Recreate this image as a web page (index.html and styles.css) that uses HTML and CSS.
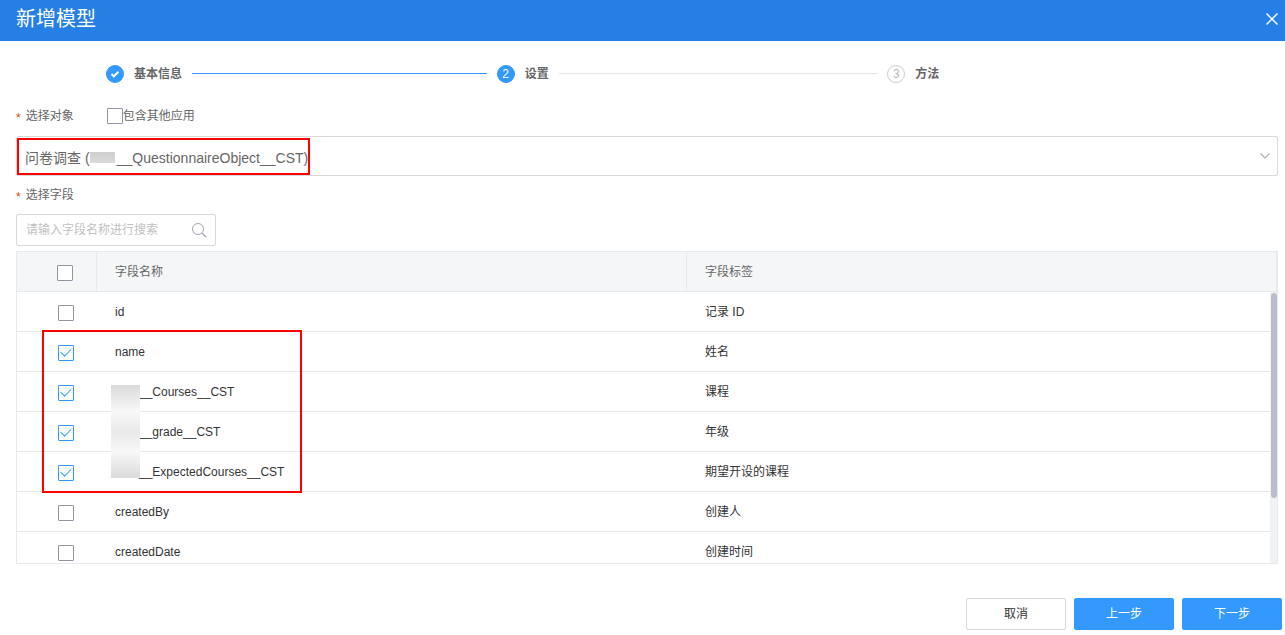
FILE: index.html
```html
<!DOCTYPE html>
<html lang="zh-CN">
<head>
    <meta charset="UTF-8">
    <meta name="viewport" content="width=device-width, initial-scale=1.0">
    <title>新增模型</title>
    <link rel="stylesheet" href="styles.css">
</head>
<body>

<header class="header">
    <h1>新增模型</h1>
    <button class="close" type="button" aria-label="关闭">
        <svg width="12" height="12" viewBox="0 0 12 12"><path d="M.5.5l11 11M11.5.5l-11 11" stroke="#fff" stroke-width="1.4" fill="none"/></svg>
    </button>
</header>

<main class="content">
    <ol class="steps">
        <li class="step done">
            <span class="step-icon">
                <svg width="10" height="10" viewBox="0 0 10 10"><path d="M1.5 5l2.3 2.3L8.5 2.8" stroke="#fff" stroke-width="2" fill="none"/></svg>
            </span>
            <span class="step-title">基本信息</span>
        </li>
        <li class="step active">
            <span class="step-icon">2</span>
            <span class="step-title">设置</span>
        </li>
        <li class="step">
            <span class="step-icon">3</span>
            <span class="step-title">方法</span>
        </li>
    </ol>

    <div class="field-row">
        <label class="required" for="object">选择对象</label>
        <label class="check-label"><input type="checkbox" class="checkbox">包含其他应用</label>
    </div>
    <div class="select-box">
        <select id="object">
            <option>问卷调查 (&nbsp;&nbsp;&nbsp;&nbsp;&nbsp;&nbsp;&nbsp;__QuestionnaireObject__CST)</option>
        </select>
        <svg class="arrow" width="10" height="6" viewBox="0 0 10 6"><path d="M.5.5L5 5 9.5.5" stroke="#adb0b8" stroke-width="1.2" fill="none"/></svg>
        <span class="mask select-mask"></span>
        <span class="mark select-mark"></span>
    </div>

    <div class="field-row">
        <label class="required" for="search">选择字段</label>
    </div>
    <div class="search">
        <input type="text" id="search" placeholder="请输入字段名称进行搜索">
        <svg width="16" height="16" viewBox="0 0 16 16"><circle cx="7" cy="7" r="5.5" stroke="#a0a5b0" fill="none"/><path d="M11 11l4 4" stroke="#a0a5b0" stroke-width="1.2" fill="none"/></svg>
    </div>

    <div class="table-box">
        <div class="table-view">
            <table>
                <thead>
                    <tr>
                        <th class="col-check"><input type="checkbox" class="checkbox" aria-label="全选"></th>
                        <th>字段名称</th>
                        <th>字段标签</th>
                    </tr>
                </thead>
                <tbody>
                    <tr>
                        <td class="col-check"><input type="checkbox" class="checkbox" aria-label="id"></td>
                        <td>id</td>
                        <td>记录 ID</td>
                    </tr>
                    <tr>
                        <td class="col-check"><input type="checkbox" class="checkbox" aria-label="name" checked></td>
                        <td>name</td>
                        <td>姓名</td>
                    </tr>
                    <tr>
                        <td class="col-check"><input type="checkbox" class="checkbox" aria-label="Courses" checked></td>
                        <td><span class="prefix"></span>__Courses__CST</td>
                        <td>课程</td>
                    </tr>
                    <tr>
                        <td class="col-check"><input type="checkbox" class="checkbox" aria-label="grade" checked></td>
                        <td><span class="prefix"></span>__grade__CST</td>
                        <td>年级</td>
                    </tr>
                    <tr>
                        <td class="col-check"><input type="checkbox" class="checkbox" aria-label="ExpectedCourses" checked></td>
                        <td><span class="prefix"></span>__ExpectedCourses__CST</td>
                        <td>期望开设的课程</td>
                    </tr>
                    <tr>
                        <td class="col-check"><input type="checkbox" class="checkbox" aria-label="createdBy"></td>
                        <td>createdBy</td>
                        <td>创建人</td>
                    </tr>
                    <tr>
                        <td class="col-check"><input type="checkbox" class="checkbox" aria-label="createdDate"></td>
                        <td>createdDate</td>
                        <td>创建时间</td>
                    </tr>
                </tbody>
            </table>
        </div>
        <div class="scrollbar"><div class="thumb"></div></div>
        <span class="mask table-mask"></span>
        <span class="mark table-mark"></span>
    </div>
</main>

<footer class="footer">
    <button type="button" class="btn">取消</button>
    <button type="button" class="btn primary">上一步</button>
    <button type="button" class="btn primary">下一步</button>
</footer>

</body>
</html>
```
FILE: styles.css
```css
* {
    box-sizing: border-box;
}
body {
    margin: 0;
    font-family: "Liberation Sans", "Noto Sans CJK SC", sans-serif;
    font-size: 12px;
    line-height: 16px;
    color: #333;
    background-color: #fff;
}
input, select, button {
    font-family: inherit;
    font-size: inherit;
}

/* Header */
.header {
    display: flex;
    justify-content: space-between;
    align-items: center;
    height: 41px;
    padding: 0 7px 4px 16px;
    background-color: #267fe4;
    color: #fff;
}
.header h1 {
    margin: 0;
    font-size: 20px;
    line-height: 24px;
    font-weight: normal;
}
.close {
    display: flex;
    padding: 0;
    border: none;
    background: none;
    cursor: pointer;
}

.content {
    padding: 24px 7px 0 16px;
}

/* Steps */
.steps {
    display: grid;
    grid-template-columns: repeat(3, 1fr);
    margin: 0 0 25px;
    padding: 0 0 0 90px;
    list-style: none;
}
.step {
    display: flex;
    align-items: center;
    gap: 10px;
    height: 18px;
    padding-right: 10px;
}
.step:not(:last-child)::after {
    content: "";
    flex: 1;
    height: 1px;
    margin-bottom: 1px;
    background-color: #e6e6e6;
}
.step.done:not(:last-child)::after {
    background-color: #39f;
}
.step-icon {
    display: flex;
    justify-content: center;
    align-items: center;
    width: 18px;
    height: 18px;
    border: 1px solid #ccc;
    border-radius: 50%;
    color: #bbb;
}
.done .step-icon, .active .step-icon {
    border-color: #39f;
    background-color: #39f;
    color: #fff;
}
.step-title {
    font-weight: bold;
    color: #666;
}

/* Form */
.field-row {
    display: flex;
    align-items: center;
    gap: 33px;
    height: 16px;
    margin-bottom: 12px;
    color: #666;
}
.required {
    display: flex;
    height: 16px;
}
.required::before {
    content: "*";
    margin-right: 5px;
    padding-top: 2px;
    color: #e6400c;
}
.check-label {
    display: flex;
    align-items: center;
}
.checkbox {
    appearance: none;
    width: 16px;
    height: 16px;
    margin: 0;
    border: 1px solid #9096a3;
    border-radius: 1px;
    background-color: #fff;
}
.checkbox:checked {
    place-content: center;
    border-color: #39f;
}
.checkbox:checked::before {
    content: "";
    width: 9px;
    height: 5px;
    margin-bottom: 4px;
    border-left: 1px solid #39f;
    border-bottom: 1px solid #39f;
    transform: rotate(-45deg);
}
.select-box {
    position: relative;
    margin-bottom: 11px;
}
.select-box select {
    display: block;
    appearance: none;
    width: 100%;
    height: 40px;
    padding: 3px 30px 0 8px;
    border: 1px solid #d9d9d9;
    border-radius: 2px;
    background-color: #fff;
    color: #666;
    font-size: 14px;
}
.arrow {
    position: absolute;
    top: 17px;
    right: 8px;
}
.search {
    display: flex;
    align-items: center;
    width: 200px;
    height: 32px;
    margin: -1px 0 5px;
    padding: 0 8px 0 9px;
    border: 1px solid #d9d9d9;
    border-radius: 2px;
}
.search input {
    flex: 1;
    min-width: 0;
    padding: 0;
    border: none;
    outline: none;
}
.search input::placeholder {
    color: #bfbfbf;
}

/* Table */
.table-box {
    position: relative;
    border: 1px solid #e6e9ed;
}
.table-view {
    max-height: 311px;
    overflow: hidden;
}
table {
    width: 100%;
    table-layout: fixed;
    border-collapse: separate;
    border-spacing: 0;
}
th, td {
    height: 40px;
    padding: 0 18px;
    border-bottom: 1px solid #e6e9ed;
    text-align: left;
}
th {
    border-right: 1px solid #e6e9ed;
    background-color: #f5f6f8;
    color: #666;
    font-weight: normal;
}
.col-check {
    width: 80px;
    padding: 3px 0 0 41px;
}
th.col-check {
    padding-left: 40px;
}
.col-check .checkbox {
    display: grid;
}
.prefix {
    display: inline-block;
    width: 24px;
}
.scrollbar {
    position: absolute;
    top: 40px;
    right: 0;
    bottom: 0;
    width: 7px;
    padding: 1px 0 0 1px;
    background-color: #f1f2f4;
}
.thumb {
    width: 6px;
    height: 205px;
    border-radius: 3px;
    background-color: #babdcb;
}

/* Masks over the namespace and red marks */
.mask, .mark {
    position: absolute;
    pointer-events: none;
}
.mark {
    border: 2px solid #f00;
}
.select-mask {
    top: 16px;
    left: 74px;
    width: 25px;
    height: 11px;
    background: linear-gradient(#cfcfcf, #dadada);
}
.select-mark {
    top: 2px;
    left: 1px;
    width: 293px;
    height: 37px;
}
.table-mask {
    top: 133px;
    left: 94px;
    width: 29px;
    height: 93px;
    background: linear-gradient(#dadada, #f8f8f8 28%, #e9e9e9 50%, #f8f8f8 72%, #dadada);
}
.table-mark {
    top: 78px;
    left: 25px;
    width: 260px;
    height: 163px;
}

/* Footer */
.footer {
    display: flex;
    justify-content: flex-end;
    gap: 8px;
    padding: 34px 3px 5px;
}
.btn {
    width: 100px;
    height: 32px;
    padding: 0 0 3px;
    border: 1px solid #d9d9d9;
    border-radius: 2px;
    background-color: #fff;
    color: #333;
    cursor: pointer;
}
.btn.primary {
    border-color: #39f;
    background-color: #39f;
    color: #fff;
}
```
